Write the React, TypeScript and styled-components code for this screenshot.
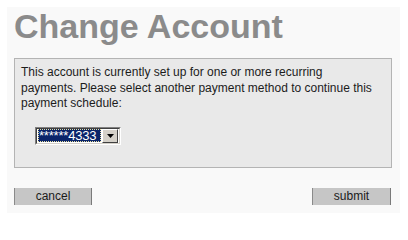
import React from 'react';
import styled, { createGlobalStyle } from 'styled-components';

const GlobalStyle = createGlobalStyle`
  body {
    margin: 0;
    background: #ffffff;
    font-family: "Liberation Sans", Arial, sans-serif;
  }
`;

const Page = styled.div`
  margin: 7px;
  width: 393px;
  height: 206px;
  box-sizing: border-box;
  background: #f9f9f9;
  padding: 0 7px;
  display: flex;
  flex-direction: column;
`;

const Title = styled.h1`
  margin: 0;
  font-size: 34px;
  line-height: 38px;
  font-weight: bold;
  color: #8b8b8b;
`;

const Box = styled.div`
  margin-top: 13px;
  width: 378px;
  height: 110px;
  box-sizing: border-box;
  border: 1px solid #b4b4b4;
  background: #e9e9e9;
  padding: 6px 11px 0 6px;
`;

const Message = styled.p`
  margin: 0;
  font-size: 12px;
  line-height: 15.5px;
  color: #1c1c1c;
`;

const SelectRow = styled.div`
  margin-top: 15px;
  padding-left: 14px;
  display: flex;
`;

const FakeSelect = styled.div`
  display: flex;
  height: 18px;
  box-sizing: border-box;
  border-top: 1px solid #808080;
  border-left: 1px solid #808080;
  border-right: 1px solid #ffffff;
  border-bottom: 1px solid #ffffff;
`;

const SelectInner = styled.div`
  display: flex;
  align-items: center;
  gap: 1px;
  padding: 0 1px 0 1px;
  border-top: 1px solid #404040;
  border-left: 1px solid #404040;
  border-right: 1px solid #d4d0c8;
  border-bottom: 1px solid #d4d0c8;
  background: #ffffff;
`;

const SelectValue = styled.span`
  display: block;
  width: 63px;
  height: 13px;
  box-sizing: border-box;
  outline: 1px dotted #e8e0a0;
  outline-offset: -1px;
  background: #0a246a;
  color: #ffffff;
  font-size: 13px;
  line-height: 13px;
  padding-left: 1px;
  white-space: nowrap;
  overflow: hidden;
  letter-spacing: -0.2px;
`;

const ArrowButton = styled.span`
  display: flex;
  align-items: center;
  justify-content: center;
  width: 16px;
  height: 14px;
  box-sizing: border-box;
  background: #d4d0c8;
  border-top: 1px solid #ffffff;
  border-left: 1px solid #ffffff;
  border-right: 1px solid #404040;
  border-bottom: 1px solid #404040;
`;

const Actions = styled.div`
  margin-top: 20px;
  width: 377px;
  display: flex;
  justify-content: space-between;
`;

const Button = styled.button<{ $width: number }>`
  width: ${p => p.$width}px;
  height: 17px;
  margin: 0;
  padding: 0;
  box-sizing: border-box;
  background: #c6c6c6;
  border: none;
  border-left: 1px solid #8a8a8a;
  border-right: 1px solid #7a7a7a;
  font-family: "Liberation Sans", Arial, sans-serif;
  font-size: 12px;
  line-height: 15px;
  color: #1a1a1a;
`;

export default function App() {
  return (
    <>
      <GlobalStyle />
      <Page>
        <Title>Change Account</Title>
        <Box>
          <Message>
            This account is currently set up for one or more recurring payments. Please select another
            payment method to continue this payment schedule:
          </Message>
          <SelectRow>
            <FakeSelect>
              <SelectInner>
                <SelectValue>******4333</SelectValue>
                <ArrowButton>
                  <svg width="7" height="4" viewBox="0 0 7 4">
                    <path d="M0 0h7L3.5 4z" fill="#000" />
                  </svg>
                </ArrowButton>
              </SelectInner>
            </FakeSelect>
          </SelectRow>
        </Box>
        <Actions>
          <Button $width={78}>cancel</Button>
          <Button $width={79}>submit</Button>
        </Actions>
      </Page>
    </>
  );
}
